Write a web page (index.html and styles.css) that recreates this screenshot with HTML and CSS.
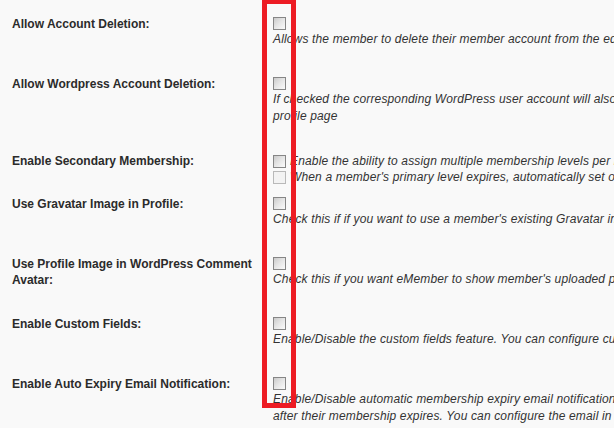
FILE: index.html
```html
<!DOCTYPE html>
<html>
<head>
<meta charset="utf-8">
<link rel="stylesheet" href="styles.css">
</head>
<body>
<div class="settings">
  <div class="row">
    <div class="label">Allow Account Deletion:</div>
    <div class="field">
      <div class="check-line"><input type="checkbox" class="cb"></div>
      <div class="desc">Allows the member to delete their member account from the edit profile page.</div>
    </div>
  </div>
  <div class="row">
    <div class="label">Allow Wordpress Account Deletion:</div>
    <div class="field">
      <div class="check-line"><input type="checkbox" class="cb"></div>
      <div class="desc">If checked the corresponding WordPress user account will also be deleted when a member deletes their account from the<br>profile page</div>
    </div>
  </div>
  <div class="row">
    <div class="label">Enable Secondary Membership:</div>
    <div class="field">
      <div class="opt-line"><input type="checkbox" class="cb"><span class="opt-text">Enable the ability to assign multiple membership levels per member</span></div>
      <div class="opt-line"><input type="checkbox" class="cb cb-light"><span class="opt-text">When a member's primary level expires, automatically set one of the secondary levels</span></div>
    </div>
  </div>
  <div class="row">
    <div class="label">Use Gravatar Image in Profile:</div>
    <div class="field">
      <div class="check-line"><input type="checkbox" class="cb"></div>
      <div class="desc">Check this if if you want to use a member's existing Gravatar image in the profile.</div>
    </div>
  </div>
  <div class="row">
    <div class="label">Use Profile Image in WordPress Comment Avatar:</div>
    <div class="field">
      <div class="check-line"><input type="checkbox" class="cb"></div>
      <div class="desc">Check this if you want eMember to show member's uploaded profile image as comment avatar.</div>
    </div>
  </div>
  <div class="row">
    <div class="label">Enable Custom Fields:</div>
    <div class="field">
      <div class="check-line"><input type="checkbox" class="cb"></div>
      <div class="desc">Enable/Disable the custom fields feature. You can configure custom fields from the settings menu.</div>
    </div>
  </div>
  <div class="row">
    <div class="label">Enable Auto Expiry Email Notification:</div>
    <div class="field">
      <div class="check-line"><input type="checkbox" class="cb"></div>
      <div class="desc">Enable/Disable automatic membership expiry email notification. An email will be sent to the member<br>after their membership expires. You can configure the email in the settings.</div>
    </div>
  </div>
</div>
<div class="highlight"></div>
</body>
</html>
```

FILE: styles.css
```css
html, body {
  margin: 0;
  padding: 0;
  overflow: hidden;
}
body {
  background: #f9f9f9;
  font-family: "Liberation Sans", Arial, sans-serif;
  font-size: 12px;
  color: #333;
  width: 614px;
  height: 428px;
  position: relative;
}
.settings {
  padding-top: 11px;
  padding-left: 12px;
}
.row {
  display: grid;
  grid-template-columns: 261px 1000px;
  padding: 5px 0 6px;
}
.label {
  font-weight: bold;
  line-height: 16px;
  color: #2b2b2b;
  padding-right: 8px;
}
.field {
  display: flex;
  flex-direction: column;
}
.check-line {
  height: 15px;
}
.cb {
  -webkit-appearance: none;
  appearance: none;
  display: block;
  margin: 1px 0 0 0;
  width: 13px;
  height: 13px;
  box-sizing: border-box;
  border: 1px solid #868686;
  background: linear-gradient(135deg, #cbcbcb 0%, #e6e6e6 50%, #fbfbfb 100%);
}
.cb-light {
  border-color: #b9b9b9;
  background: #f3f3f3;
}
.desc {
  font-style: italic;
  line-height: 17px;
  white-space: nowrap;
  margin-bottom: 17px;
  letter-spacing: 0.15px;
  color: #333;
}
.opt-line {
  display: flex;
  align-items: center;
  height: 16px;
}
.opt-text {
  font-style: italic;
  white-space: nowrap;
  letter-spacing: 0.15px;
  margin-left: 4px;
}
.highlight {
  position: absolute;
  left: 262px;
  top: -1px;
  width: 34px;
  height: 409px;
  box-sizing: border-box;
  border: 5px solid #ed1c24;
}
```
